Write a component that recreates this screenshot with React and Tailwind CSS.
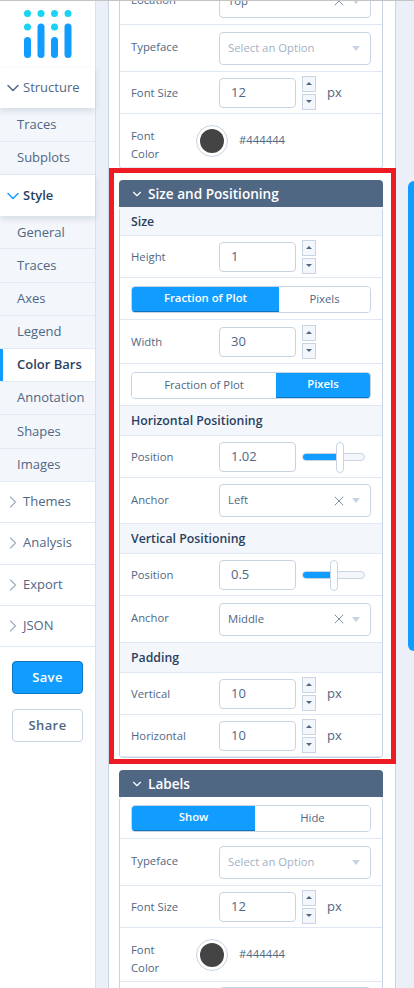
import React from "react";
import { ChevronDown, ChevronRight, X } from "lucide-react";

const Logo = () => (
  <svg width="95" height="67" viewBox="0 1 95 67" className="block">
    {[27.5, 41, 54.5, 68].map((x) => <circle key={x} cx={x} cy="13.5" r="3.5" fill="#19d3f3" />)}
    {[27.5, 54.5].map((x) => <circle key={x} cx={x} cy="27" r="3.5" fill="#19d3f3" />)}
    {[[24, 37], [37.5, 23.5], [51, 37], [64.5, 23.5]].map(([x, y]) => (
      <rect key={x} x={x} y={y} width="7" height={58 - y} rx="3.5" fill="#119dff" />
    ))}
  </svg>
);

const Group = ({ label, h, open, active }) => (
  <div className={`relative flex items-center bg-white pl-[3px] ${h} ${open ? "z-10 shadow-[0_3px_6px_rgba(80,103,132,0.18)]" : "border-b border-[#dfe8f3]"}`}>
    {open
      ? <ChevronDown size={20} strokeWidth={1.8} className={active ? "text-[#119dff]" : "text-[#506784]"} />
      : <ChevronRight size={20} strokeWidth={1.5} className="text-[#a2b1c6]" />}
    <span className={`text-[13px] ${active ? "font-semibold text-[#2a3f5f]" : "text-[#506784]"}`}>{label}</span>
  </div>
);

const Sub = ({ label, active, h = "h-[33.2px]" }) => (
  <div className={`relative flex items-center border-b border-[#e4eaf4] pl-[17px] text-[13px] ${h} ${active ? "bg-white font-semibold text-[#2a3f5f]" : "bg-[#f3f6fb] text-[#506784]"}`}>
    {active && <span className="absolute left-0 top-0 h-full w-[3px] bg-[#119dff]" />}
    {label}
  </div>
);

const Sidebar = () => (
  <div className="flex w-[96px] shrink-0 flex-col border-r border-[#d8e1ee] bg-white">
    <Logo />
    <Group label="Structure" h="h-[40px]" open />
    <Sub label="Traces" h="h-[33.6px]" />
    <Sub label="Subplots" h="h-[33.6px]" />
    <Group label="Style" h="h-[41px]" open active />
    {["General", "Traces", "Axes", "Legend"].map((l) => <Sub key={l} label={l} />)}
    <Sub label="Color Bars" active />
    {["Annotation", "Shapes", "Images"].map((l) => <Sub key={l} label={l} />)}
    <Group label="Themes" h="h-[41px]" />
    <Group label="Analysis" h="h-[42px]" />
    <Group label="Export" h="h-[41px]" />
    <Group label="JSON" h="h-[41px]" />
    <div className="mx-[12px] mt-[14.5px] flex h-[33px] w-[71px] items-center justify-center rounded border border-[#0d76bf] bg-[#119dff] text-[13px] font-semibold tracking-[0.4px] text-white">Save</div>
    <div className="mx-[12px] mt-[15px] flex h-[33px] w-[71px] items-center justify-center rounded border border-[#c8d4e3] bg-white text-[13px] font-semibold tracking-[0.4px] text-[#506784]">Share</div>
  </div>
);

const Row = ({ label, h = "h-[42px]", labelClass = "", children }) => (
  <div className={`flex items-center border-b border-[#dfe8f3] pl-[11px] ${h}`}>
    <div className={`w-[88px] shrink-0 text-[11.3px] leading-[17.5px] text-[#506784] ${labelClass}`}>{label}</div>
    {children}
  </div>
);

const Caret = () => <span className="h-0 w-0 border-x-[4.5px] border-t-[5px] border-x-transparent border-t-[#c8d4e3]" />;

const Select = ({ value, clear = true }) => (
  <div className="flex h-[33px] w-[152px] items-center rounded border border-[#c8d4e3] bg-white pl-[8px] pr-[10px] text-[11.3px]">
    <span className={`flex-1 ${clear ? "text-[#506784]" : "text-[#a2b1c6]"}`}>{value}</span>
    {clear && <X size={16} strokeWidth={1.3} className="mr-[5px] text-[#6b7f99]" />}
    <Caret />
  </div>
);

const Input = ({ value }) => (
  <div className="flex h-[30px] w-[77px] items-center rounded border border-[#c8d4e3] bg-white pl-[11px] text-[13px] text-[#506784]">{value}</div>
);

const Spin = ({ up }) => (
  <div className="flex h-[16px] w-[14px] items-center justify-center border border-[#c8d4e3] bg-[#f3f6fb]">
    <span className={`h-0 w-0 border-x-[3px] border-x-transparent ${up ? "border-b-[3px] border-b-[#506784]" : "border-t-[3px] border-t-[#506784]"}`} />
  </div>
);

const Number = ({ value, px = false }) => (
  <>
    <Input value={value} />
    <div className="ml-[6px] flex flex-col gap-[2px]"><Spin up /><Spin /></div>
    {px && <span className="ml-[11px] text-[13px] text-[#506784]">px</span>}
  </>
);

const Slider = ({ value, at }) => (
  <>
    <Input value={value} />
    <div className="relative ml-[6px] h-[8px] w-[63px] rounded-full border border-[#c8d4e3] bg-[#f3f6fb]">
      <div className="h-full rounded-l-full bg-[#119dff]" style={{ width: at }} />
      <div className="absolute top-[-12px] h-[31px] w-[8px] rounded border border-[#c8d4e3] bg-white" style={{ left: at - 1 }} />
    </div>
  </>
);

const Toggle = ({ a, b, active, split }) => (
  <div className="flex h-[42px] items-center justify-center border-b border-[#dfe8f3] pt-[1px]">
    <div className="flex h-[27px] w-[240px] overflow-hidden rounded border border-[#c8d4e3] text-[11.3px]">
      <div className={`flex items-center justify-center ${active === 0 ? "border-b border-[#0d76bf] bg-[#119dff] font-semibold text-white" : "bg-white text-[#506784]"}`} style={{ width: split }}>{a}</div>
      <div className={`flex flex-1 items-center justify-center ${active === 1 ? "border-b border-[#0d76bf] bg-[#119dff] font-semibold text-white" : "bg-white text-[#506784]"}`}>{b}</div>
    </div>
  </div>
);

const Title = ({ children, h = "h-[30px]" }) => (
  <div className={`flex items-center border-b border-[#dfe8f3] bg-[#f3f6fb] pl-[11px] pt-[2px] text-[12.3px] font-semibold text-[#2a3f5f] ${h}`}>{children}</div>
);

const Header = ({ children }) => (
  <div className="flex h-[27px] items-center rounded-t bg-[#506784] pl-[11px] pt-[1px] text-[13.6px] font-semibold text-white">
    <ChevronDown size={14} strokeWidth={2} className="mr-[4px] text-white" />
    {children}
  </div>
);

const Card = ({ children }) => (
  <div className="overflow-hidden rounded border border-t-0 border-[#c8d4e3] bg-white">{children}</div>
);

const Swatch = () => (
  <>
    <div className="ml-[-23px] flex h-[32px] w-[32px] items-center justify-center rounded-full border border-[#c8d4e3] bg-white">
      <div className="h-[24px] w-[24px] rounded-full bg-[#444444]" />
    </div>
    <span className="ml-[11px] text-[11.3px] font-medium text-[#506784]">#444444</span>
  </>
);

const Typography = () => (
  <>
    <Row h="h-[47px]" labelClass="pb-[2px]" label="Typeface"><Select value="Select an Option" clear={false} /></Row>
    <Row label="Font Size"><Number value="12" px /></Row>
    <Row h="h-[54px]" labelClass="pt-[8px]" label={<>Font<br />Color</>}><Swatch /></Row>
  </>
);

export default function App() {
  return (
    <div className="relative flex h-[988px] w-[414px] overflow-hidden border-t border-[#c4c4c4] bg-[#ebf0f8]" style={{ fontFamily: '"Open Sans", sans-serif' }}>
      <Sidebar />
      <div className="ml-[12px] flex w-[288px] shrink-0 flex-col self-start border-x border-[#c8d4e3] bg-white">
        <div className="ml-[10px] mr-[12px] mt-[-23px]">
          <Card>
            <Row h="h-[47px]" labelClass="pb-[2px]" label="Location"><Select value="Top" /></Row>
            <Typography />
          </Card>
        </div>
        <div className="relative mr-[-1px] mt-[-1px] border-[5px] border-[#ed1c24] bg-white pb-[1px] pl-[5px] pr-[8px] pt-[7px]">
          <Header>Size and Positioning</Header>
          <Card>
            <Title h="h-[29px]">Size</Title>
            <Row label="Height"><Number value="1" /></Row>
            <Toggle a="Fraction of Plot" b="Pixels" active={0} split={147} />
            <Row h="h-[44px]" label="Width"><Number value="30" /></Row>
            <Toggle a="Fraction of Plot" b="Pixels" active={1} split={144} />
            <Title>Horizontal Positioning</Title>
            <Row label="Position"><Slider value="1.02" at={34} /></Row>
            <Row h="h-[46px]" labelClass="pb-[2px]" label="Anchor"><Select value="Left" /></Row>
            <Title>Vertical Positioning</Title>
            <Row label="Position"><Slider value="0.5" at={28} /></Row>
            <Row h="h-[47px]" labelClass="pb-[2px]" label="Anchor"><Select value="Middle" /></Row>
            <Title>Padding</Title>
            <Row label="Vertical"><Number value="10" px /></Row>
            <Row label="Horizontal"><Number value="10" px /></Row>
          </Card>
        </div>
        <div className="ml-[10px] mr-[12px] mt-[6px]">
          <Header>Labels</Header>
          <Card>
            <Toggle a="Show" b="Hide" active={0} split={123} />
            <Typography />
            <div className="flex h-[40px] items-start pl-[99px] pt-[5px]">
              <div className="h-[33px] w-[152px] rounded border border-[#c8d4e3]" />
            </div>
          </Card>
        </div>
      </div>
      <div className="absolute left-[408px] top-[180px] h-[470px] w-[6px] rounded-l-full bg-[#119dff]" />
    </div>
  );
}
